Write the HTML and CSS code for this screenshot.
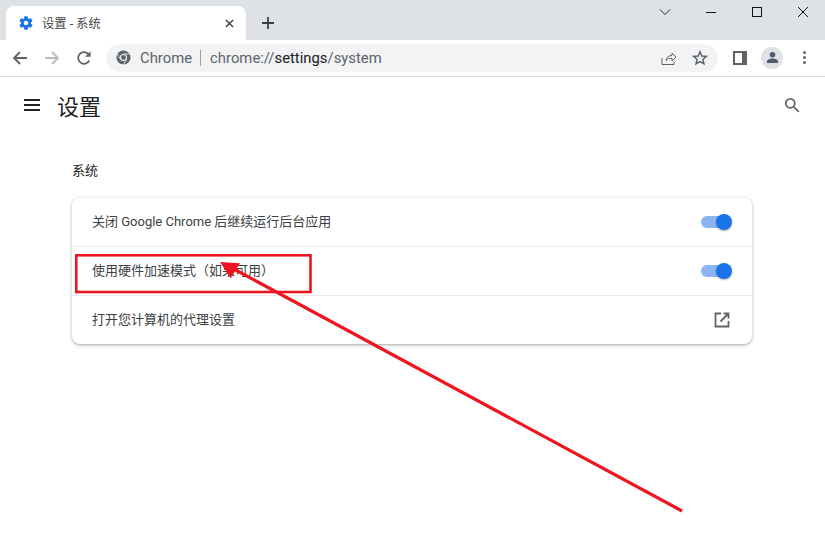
FILE: index.html
```html
<!DOCTYPE html>
<html lang="zh-CN">
<head>
  <meta charset="UTF-8" />
  <meta name="viewport" content="width=device-width, initial-scale=1.0" />
  <title>设置 - 系统</title>
  <link rel="stylesheet" href="styles.css">
</head>
<body>
  <!-- Tab strip -->
  <div class="tabstrip">
    <div class="tab">
      <svg class="tab-icon" viewBox="0 0 24 24"><path d="M19.4 13c.04-.32.07-.66.07-1s-.03-.68-.07-1l2.1-1.65c.2-.15.25-.42.12-.64l-2-3.46c-.12-.22-.39-.3-.61-.22l-2.49 1c-.52-.4-1.08-.73-1.69-.98l-.38-2.65A.49.49 0 0 0 14 2h-4c-.25 0-.46.18-.49.42l-.38 2.65c-.61.25-1.17.59-1.69.98l-2.49-1a.5.5 0 0 0-.61.22l-2 3.46c-.13.22-.07.49.12.64L4.56 11c-.04.32-.07.66-.07 1s.03.68.07 1l-2.1 1.65c-.2.15-.25.42-.12.64l2 3.46c.12.22.39.3.61.22l2.49-1c.52.4 1.08.73 1.69.98l.38 2.65c.03.24.24.42.49.42h4c.25 0 .46-.18.49-.42l.38-2.65c.61-.25 1.17-.59 1.69-.98l2.49 1c.23.08.49 0 .61-.22l2-3.46c.12-.22.07-.49-.12-.64L19.4 13zM12 15.5a3.5 3.5 0 1 1 0-7 3.5 3.5 0 0 1 0 7z" fill="#1a73e8"/></svg>
      <span class="tab-title">设置 - 系统</span>
      <svg class="tab-close" viewBox="0 0 10 10"><path d="M1 1l8 8M9 1l-8 8" stroke="#3c4043" stroke-width="1.6" fill="none"/></svg>
    </div>
    <svg class="newtab" viewBox="0 0 14 14"><path d="M7 1v12M1 7h12" stroke="#3c4043" stroke-width="1.8" fill="none"/></svg>
    <div class="winctl">
      <svg viewBox="0 0 12 8" class="win-chevron"><path d="M1 1.5l5 5 5-5" stroke="#222" stroke-width="1" fill="none"/></svg>
      <svg viewBox="0 0 12 12" class="win-btn"><path d="M1 6.5h10" stroke="#111" stroke-width="1" fill="none"/></svg>
      <svg viewBox="0 0 12 12" class="win-btn"><rect x="1.5" y="1.5" width="9" height="9" stroke="#111" stroke-width="1" fill="none"/></svg>
      <svg viewBox="0 0 12 12" class="win-btn"><path d="M1 1l10 10M11 1L1 11" stroke="#111" stroke-width="1" fill="none"/></svg>
    </div>
  </div>

  <!-- Toolbar -->
  <div class="toolbar">
    <svg class="nav-icon" viewBox="0 0 16 16"><path d="M15 8H2M8 2L2 8l6 6" stroke="#5f6368" stroke-width="1.8" fill="none"/></svg>
    <svg class="nav-icon" viewBox="0 0 16 16"><path d="M1 8h13M8 2l6 6-6 6" stroke="#b9bbbe" stroke-width="1.8" fill="none"/></svg>
    <svg class="nav-icon" viewBox="0 0 16 16"><path d="M13.2 10.5A5.8 5.8 0 1 1 12.4 4.2" stroke="#5f6368" stroke-width="1.8" fill="none"/><path d="M14.6 1.2v5.6H9z" fill="#5f6368"/></svg>
    <div class="omnibox">
      <svg class="chrome-icon" viewBox="0 0 16 16">
        <circle cx="8" cy="8" r="7.500" fill="#5f6368"/>
        <circle cx="8" cy="8" r="3.800" fill="#f1f3f4"/>
        <circle cx="8" cy="8" r="2.600" fill="#5f6368"/>
        <path d="M8 4.200h7M4.700 9.900L1.200 3.900M11.300 9.900L7.800 15.900" stroke="#f1f3f4" stroke-width=".9" fill="none"/>
      </svg>
      <span class="chip">Chrome</span>
      <span class="chip-sep"></span>
      <span class="url"><span class="url-dim">chrome://</span>settings<span class="url-dim">/system</span></span>
      <svg class="omni-share" viewBox="0 0 16 16"><path d="M1 8v6.500h12V12M5 10.500c.5-3.500 3-5 6-5V3l4 4-4 4V8.300c-2.500 0-4.500.5-6 2.200z" stroke="#5f6368" stroke-width="1" fill="none"/></svg>
      <svg class="omni-star" viewBox="0 0 16 16"><path d="M8 1.800l1.800 4.200 4.500.4-3.400 3 1 4.400L8 11.500l-3.900 2.300 1-4.400-3.400-3 4.500-.4z" stroke="#5f6368" stroke-width="1.500" fill="none"/></svg>
    </div>
    <div class="sidepanel"><span class="sidepanel-inner"></span></div>
    <div class="avatar">
      <svg viewBox="0 0 14 14"><circle cx="7" cy="4" r="3" fill="#4d5a70"/><path d="M1 13v-1.500C1 9.300 4.500 8.200 7 8.200s6 1.100 6 3.300V13z" fill="#4d5a70"/></svg>
    </div>
    <div class="dots"><span></span><span></span><span></span></div>
  </div>

  <!-- Settings page -->
  <div class="page">
    <div class="page-head">
      <div class="burger"><span></span><span></span><span></span></div>
      <h1>设置</h1>
      <svg class="search" viewBox="0 0 16 16"><circle cx="6.300" cy="6.300" r="4.500" stroke="#5f6368" stroke-width="1.800" fill="none"/><path d="M9.800 9.800l5 5" stroke="#5f6368" stroke-width="1.800" fill="none"/></svg>
    </div>
    <h2>系统</h2>
    <div class="card">
      <div class="row">
        <span class="row-label">关闭 Google Chrome 后继续运行后台应用</span>
        <div class="toggle"><span class="knob"></span></div>
      </div>
      <div class="row">
        <span class="row-label">使用硬件加速模式（如果可用）</span>
        <div class="toggle"><span class="knob"></span></div>
      </div>
      <div class="row">
        <span class="row-label">打开您计算机的代理设置</span>
        <svg class="launch" viewBox="0 0 16 16"><path d="M7 1.500H1.500v13h13V9M9.500 1.500h5v5M14.500 1.500L6.500 9.500" stroke="#5f6368" stroke-width="1.800" fill="none"/></svg>
      </div>
    </div>
  </div>

  <!-- Red annotation drawn over the screenshot -->
  <svg class="annotation" viewBox="0 0 825 551">
    <rect x="76.300" y="255.300" width="234.200" height="36.700" stroke="#ee1520" stroke-width="2.600" fill="none"/>
    <path d="M682 511L232 268" stroke="#ee1520" stroke-width="3.200" fill="none"/>
    <path d="M220 262L240 263.300L230.700 278.300z" fill="#ee1520"/>
  </svg>
</body>
</html>
```

FILE: styles.css
```css
body, html {
  margin: 0;
  padding: 0;
  width: 100%;
  height: 100%;
  overflow: hidden;
  background: #fff;
  color: #202124;
  font-family: "Roboto", "Noto Sans CJK SC", sans-serif;
}
svg {
  display: block;
  flex: none;
}
.tabstrip {
  height: 40px;
  background: #dee1e6;
  display: flex;
  align-items: flex-end;
  box-sizing: border-box;
  padding-left: 6px;
}
.tab {
  width: 240px;
  height: 34px;
  box-sizing: border-box;
  background: #fff;
  border-radius: 8px 8px 0 0;
  display: flex;
  align-items: center;
  padding: 0 12px 0 12px;
  gap: 8px;
}
.tab-icon {
  width: 16px;
  height: 16px;
}
.tab-title {
  flex: 1;
  font-size: 12.3px;
  color: #45474a;
}
.tab-close {
  width: 9px;
  height: 9px;
}
.newtab {
  width: 14px;
  height: 14px;
  margin: 0 0 10px 15px;
}
.winctl {
  margin-left: auto;
  align-self: flex-start;
  display: flex;
  align-items: center;
  height: 24px;
  padding-right: 16px;
  gap: 34px;
}
.win-chevron {
  width: 12px;
  height: 8px;
}
.win-btn {
  width: 12px;
  height: 12px;
}
.toolbar {
  height: 37px;
  box-sizing: border-box;
  border-bottom: 1px solid #dadce0;
  display: flex;
  align-items: center;
  padding: 0 0 1px 12px;
}
.nav-icon {
  width: 16px;
  height: 16px;
  margin-right: 16px;
}
.omnibox {
  width: 612px;
  height: 28px;
  margin-left: -2px;
  background: #f1f3f4;
  border-radius: 14px;
  display: flex;
  align-items: center;
  padding: 0 10px;
  box-sizing: border-box;
  font-size: 14.85px;
}
.chrome-icon {
  width: 15px;
  height: 15px;
  margin-right: 9px;
}
.chip {
  color: #5f6368;
}
.chip-sep {
  width: 1px;
  height: 16px;
  background: #9aa0a6;
  margin: 0 9px 0 8px;
}
.url {
  flex: 1;
  color: #202124;
}
.url-dim {
  color: #5f6368;
}
.omni-share {
  width: 16px;
  height: 16px;
  margin-right: 15px;
}
.omni-star {
  width: 16px;
  height: 16px;
}
.sidepanel {
  width: 14px;
  height: 14px;
  margin-left: 15px;
  background: #5f6368;
  box-sizing: border-box;
  padding: 2px 5px 2px 2px;
}
.sidepanel-inner {
  display: block;
  height: 100%;
  background: #fff;
}
.avatar {
  width: 22px;
  height: 22px;
  margin-left: 14px;
  border-radius: 50%;
  background: #dee1e6;
  display: flex;
  align-items: center;
  justify-content: center;
}
.avatar svg {
  width: 13px;
  height: 13px;
}
.dots {
  margin-left: 19px;
  padding-left: 1px;
  display: flex;
  flex-direction: column;
  gap: 2px;
}
.dots span {
  width: 3px;
  height: 3px;
  border-radius: 50%;
  background: #5f6368;
}
.page-head {
  height: 56px;
  display: flex;
  align-items: center;
  padding: 0 25px 0 24px;
}
.burger {
  width: 16px;
  display: flex;
  flex-direction: column;
  gap: 3px;
  margin-right: 17px;
}
.burger span {
  height: 2px;
  background: #202124;
}
h1 {
  flex: 1;
  margin: 0;
  font-size: 22px;
  font-weight: 400;
  color: #202124;
}
.search {
  width: 16px;
  height: 16px;
}
h2 {
  margin: 29px 0 0 72px;
  font-size: 13px;
  line-height: 18px;
  font-weight: 400;
  color: #202124;
}
.card {
  width: 680px;
  margin: 18px 0 0 72px;
  background: #fff;
  border-radius: 8px;
  box-shadow: 0 1px 2px rgba(60, 64, 67, .3), 0 1px 4px 1px rgba(60, 64, 67, .15);
}
.row {
  height: 49px;
  box-sizing: border-box;
  display: flex;
  align-items: center;
  justify-content: space-between;
  padding: 0 20px;
  font-size: 13px;
  color: #3c4043;
  border-top: 1px solid #ebebeb;
}
.row:first-child {
  border-top: none;
  height: 48px;
}
/* label sits a little above the row's centre line */
.row-label {
  padding-bottom: 4px;
}
.toggle {
  position: relative;
  width: 28px;
  height: 12px;
  margin-right: 3px;
  border-radius: 6px;
  background: #8ab4f3;
}
.knob {
  position: absolute;
  top: -2px;
  right: -3px;
  width: 16px;
  height: 16px;
  border-radius: 50%;
  background: #1a73e8;
  box-shadow: 0 1px 2px rgba(0, 0, 0, .3);
}
.launch {
  width: 16px;
  height: 16px;
  margin-right: 2px;
}
.annotation {
  position: absolute;
  top: 0;
  left: 0;
  width: 825px;
  height: 551px;
}
```
